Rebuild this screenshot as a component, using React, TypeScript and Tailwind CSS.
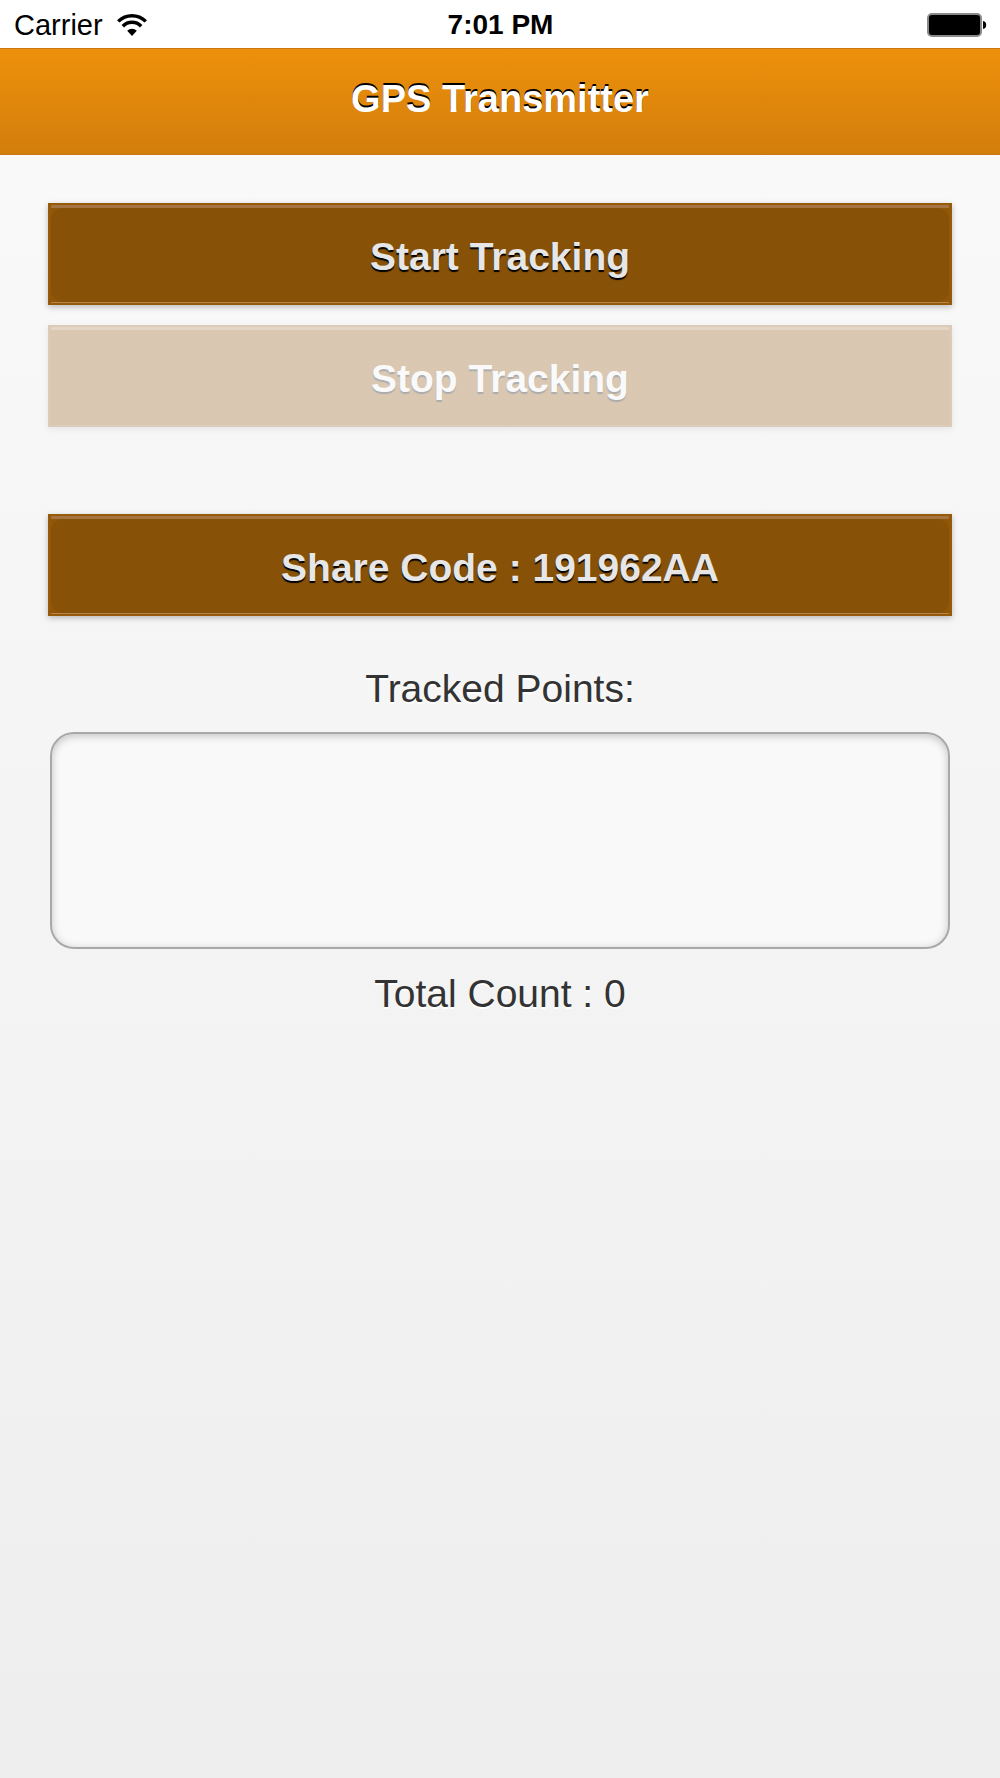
import type { ReactNode } from "react";
import clsx from "clsx";

type TrackerButtonProps = {
  children: ReactNode;
  disabled?: boolean;
};

function WifiIcon() {
  return (
    <svg viewBox="0 0 30 22" className="w-[30px] h-[22px]" fill="none" stroke="black" strokeWidth="3.4" aria-hidden="true">
      <path d="M1.2 7.4C9 -0.2 21 -0.2 28.8 7.4" />
      <path d="M5.8 12.2C11 7 19 7 24.2 12.2" />
      <path d="M15 22L10.2 16.8C12.8 14 17.2 14 19.8 16.8Z" fill="black" stroke="none" />
    </svg>
  );
}

function BatteryIcon() {
  return (
    <svg viewBox="0 0 60 24" className="w-[60px] h-6" aria-hidden="true">
      <rect x="1" y="1" width="53" height="22" rx="4" fill="black" stroke="#8a8a8a" strokeWidth="2" />
      <path d="M56 8C60.3 8.4 60.3 15.6 56 16Z" fill="black" />
    </svg>
  );
}

function StatusBar() {
  return (
    <div className="grid grid-cols-3 items-center h-12 pl-[14px] pr-[13px] pt-[2px] bg-white text-black">
      <div className="flex items-center gap-[14px] text-[29px] leading-[44px]">
        <span>Carrier</span>
        <WifiIcon />
      </div>
      <div className="text-center text-[28px] leading-[44px] font-bold">7:01 PM</div>
      <div className="flex justify-end">
        <BatteryIcon />
      </div>
    </div>
  );
}

function TrackerButton({ children, disabled = false }: TrackerButtonProps) {
  return (
    <button
      type="button"
      disabled={disabled}
      className={clsx(
        "block w-full border-2 px-px shadow-[0_2px_6px_rgba(0,0,0,0.25)]",
        disabled ? "border-[#9c672a] bg-[#965c14] opacity-30" : "border-[#965a0a] bg-[#915607]"
      )}
    >
      <span
        className={clsx(
          "block border-t-[3px] border-b",
          disabled ? "border-t-[#b58a5a] border-b-[#965c14]" : "border-t-[#a47543] border-b-[#b3844c]"
        )}
      >
        <span
          className={clsx(
            "block rounded-xl pt-1 text-[39px] leading-[90px] font-bold [text-shadow:0_2px_1px_#000]",
            disabled ? "bg-[#965c14] text-white" : "bg-[#875208] text-[#e6e6e6]"
          )}
        >
          {children}
        </span>
      </span>
    </button>
  );
}

export default function App() {
  return (
    <div className="min-h-screen flex flex-col bg-white font-['Liberation_Sans',Arial,sans-serif]">
      <StatusBar />
      <header className="border-y border-[#c9790f] bg-linear-to-b from-[#ed900b] to-[#d37e0c] pb-1">
        <h1 className="text-center text-[38px] leading-[101px] font-bold text-white [text-shadow:0_-2px_0_#000]">
          GPS Transmitter
        </h1>
      </header>
      <main className="flex-1 bg-linear-to-b from-[#f9f9f9] to-[#eeeeee] px-12 pt-12 text-center text-[#333333]">
        <div className="flex flex-col gap-5">
          <TrackerButton>Start Tracking</TrackerButton>
          <TrackerButton disabled>Stop Tracking</TrackerButton>
        </div>
        <div className="mt-[87px]">
          <TrackerButton>Share Code : 191962AA</TrackerButton>
        </div>
        <div className="mt-12 px-[2px] text-[39px] leading-[50px] [text-shadow:0_2px_0_#fff]">
          <label htmlFor="points" className="block">
            Tracked Points:
          </label>
          <textarea
            id="points"
            readOnly
            className="block mt-[18px] w-full h-[217px] resize-none rounded-3xl border-2 border-[#a8a8a8] bg-[#f9f9f9] p-4 outline-none shadow-[inset_0_2px_8px_rgba(0,0,0,0.22)]"
          />
          <p className="mt-5">Total Count : 0</p>
        </div>
      </main>
    </div>
  );
}
